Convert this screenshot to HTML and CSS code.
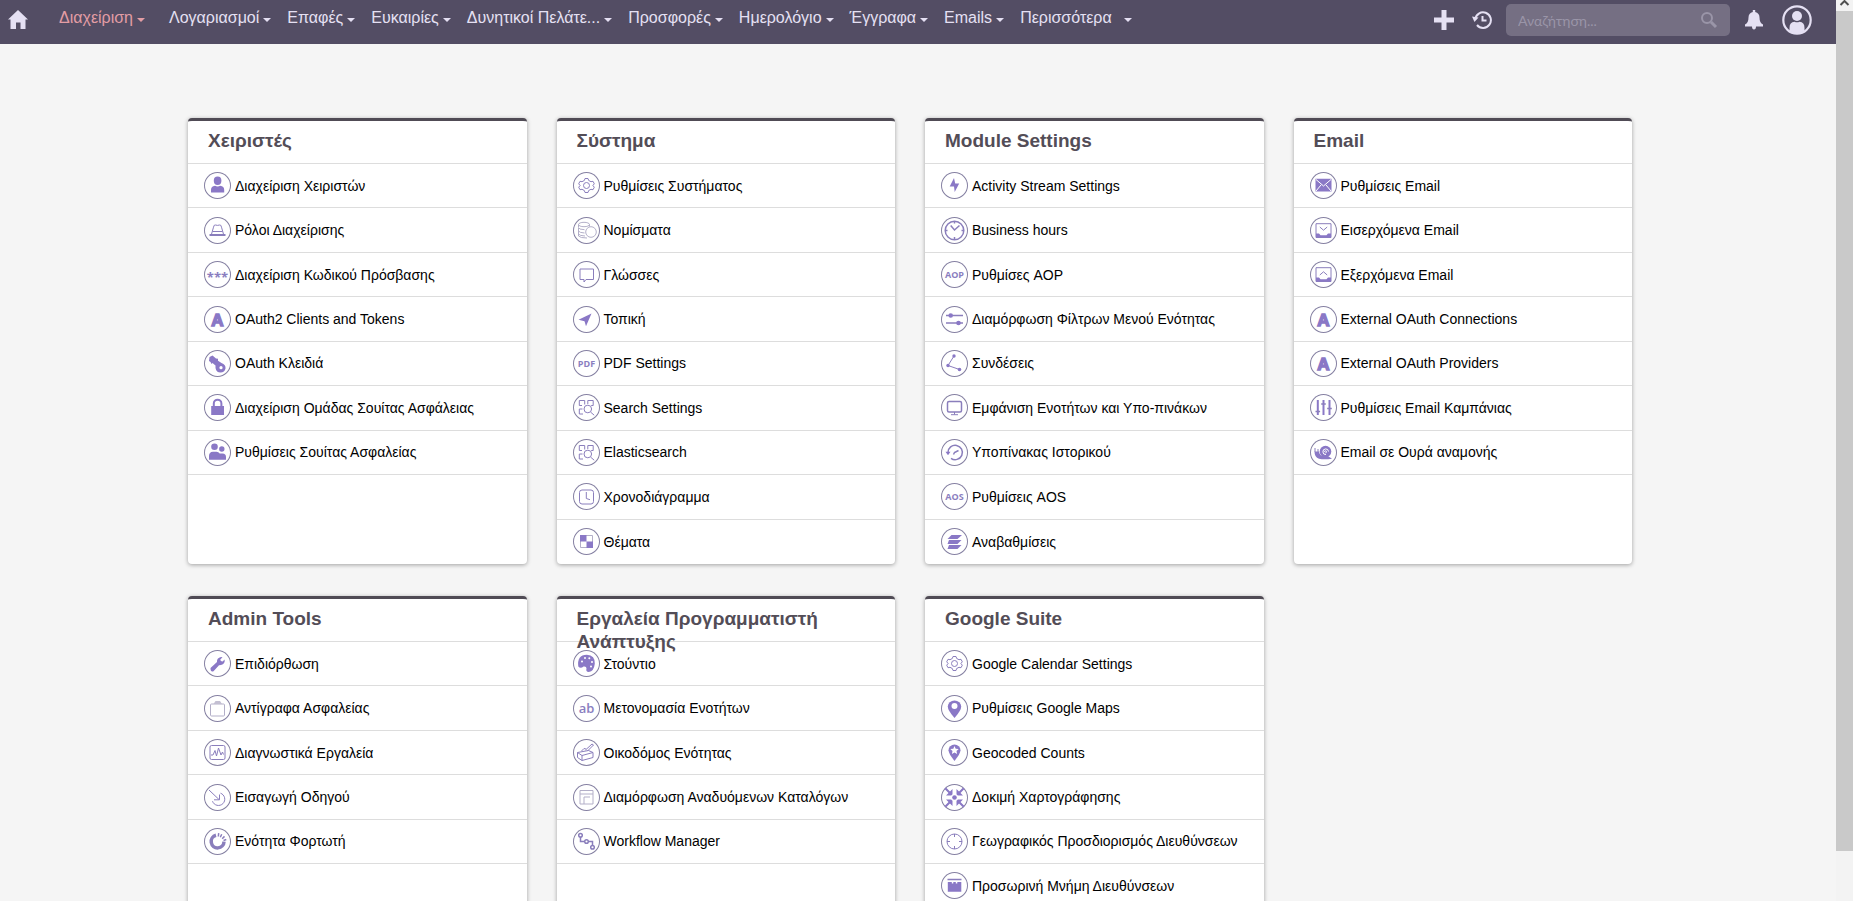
FILE: index.html
```html
<!DOCTYPE html>
<html lang="el">
<head>
    <meta charset="UTF-8">
    <meta name="viewport" content="width=device-width, initial-scale=1.0">
    <title>Διαχείριση</title>
    <link rel="stylesheet" href="styles.css">
</head>
<body>
    <svg class="sprite" aria-hidden="true">
        <symbol id="user" viewBox="0 0 27 27"><ellipse class="fill" cx="13.600" cy="8.700" rx="3.800" ry="4.200"/><path class="fill" d="M7 20.500v-2.500q0-4 4-4.300q2.600 1.500 5.200 0q4 .3 4 4.300v2.500z"/></symbol>
        <symbol id="hat" viewBox="0 0 27 27"><path class="line" d="M5.500 17.500h16M7.500 17.200l2-7q.4-2.700 2-2.200q2 .8 4 0q1.600-.5 2 2.200l2 7M8.500 14.500h10"/><path class="line" d="M5.500 18.500h16"/></symbol>
        <symbol id="stars" viewBox="0 0 27 27"><text x="13.500" y="21" font-size="13">***</text></symbol>
        <symbol id="oauth" viewBox="0 0 27 27"><text class="heavy" x="13.500" y="19.500" font-size="17">A</text></symbol>
        <symbol id="key" viewBox="0 0 27 27"><path class="fill" d="M5.500 7l3-1.500l3.500 3l2 .3v2l3.500 2.200q4.500 1.500 4 5.500q-.8 4-5 4t-5-4.500v-2.500l-3-2.500l-1 1l-1-2l-1.500-1z"/><circle class="hole" cx="17" cy="17.700" r="1.600"/></symbol>
        <symbol id="lock" viewBox="0 0 27 27"><path class="fill" d="M7.200 12h12.800v9h-12.800z"/><path class="thick" d="M9.800 12v-2.500a3.800 3.800 0 0 1 7.600 0v2.500"/></symbol>
        <symbol id="group" viewBox="0 0 27 27"><circle class="fill" cx="10.500" cy="7.800" r="3.300"/><circle class="fill" cx="17.800" cy="10" r="2.700"/><path class="fill" d="M5 20.700v-3.700q0-4 4-4.200h3.500q2 .2 3.200 1.700h2.800q3.500.2 3.500 3.500v2.700z"/></symbol>
        <symbol id="gear" viewBox="0 0 27 27"><path class="line" d="M12 6.500h3l.7 2l2.300 1.200l2-.4l1.300 2.500l-1.400 1.700l1.400 1.700l-1.300 2.500l-2-.4l-2.300 1.200l-.7 2h-3l-.7-2l-2.300-1.200l-2 .4l-1.300-2.500l1.400-1.700l-1.400-1.700l1.300-2.500l2 .4l2.300-1.200z"/><circle class="line" cx="13.500" cy="13.500" r="3"/></symbol>
        <symbol id="coins" viewBox="0 0 27 27"><ellipse class="thin" cx="11" cy="7.500" rx="5.500" ry="2.200"/><path class="thin" d="M5.500 7.500v3q0 2 6 2.200M5.500 11v3q1 1.800 6 2M5.500 14v3q1 1.800 6.500 2M5.500 17v2q1.500 2 8.500 2M16.500 7.500v2"/><circle class="thin" cx="18" cy="15" r="5.300"/></symbol>
        <symbol id="speech" viewBox="0 0 27 27"><path class="line" d="M7 8h13.500v10.500h-7.500l-2 2.500v-2.500h-4z"/></symbol>
        <symbol id="locale" viewBox="0 0 27 27"><path class="fill" d="M18.500 7.500l-13 6.200l6 1.500l1.500 5z"/></symbol>
        <symbol id="pdf" viewBox="0 0 27 27"><text x="13.500" y="16.500" font-size="9">PDF</text></symbol>
        <symbol id="find" viewBox="0 0 27 27"><path class="line" d="M9 11.500h-2.700v-5h5.400v4M14.800 10v-3.500h5.400v5h-2M10 20h-3.700v-5h3.200M17.700 18.200l3.500 3"/><circle class="line" cx="14.800" cy="15" r="3.800"/></symbol>
        <symbol id="clock" viewBox="0 0 27 27"><rect class="line" x="6.500" y="7" width="14" height="14" rx="2.500"/><path class="line" d="M13.300 9v6.500l3.700 1.200"/></symbol>
        <symbol id="themes" viewBox="0 0 27 27"><path class="thin" d="M7.500 7.500h12v12h-12z"/><path class="fill" d="M7 7h6.500v6.500h-6.500zM13.500 13.500h6.500v6.500h-6.500z"/></symbol>
        <symbol id="bolt" viewBox="0 0 27 27"><path class="fill" d="M13 6l-4.300 8.500h4.300l.7 5.500l4.500-8.500h-4z"/></symbol>
        <symbol id="hours" viewBox="0 0 27 27"><circle class="medium" cx="13.500" cy="13.500" r="9.300"/><path class="medium" d="M9.700 8.500l3.800 4.500l5-4.500M13.500 4.500v2M13.500 20v2.500M4.500 13.500h2M20.500 13.500h2"/></symbol>
        <symbol id="aop" viewBox="0 0 27 27"><text x="13.500" y="16.500" font-size="9">AOP</text></symbol>
        <symbol id="filters" viewBox="0 0 27 27"><path class="medium" d="M5 9.500h17M5 17h17"/><circle class="fill" cx="9.700" cy="9.500" r="2.300"/><circle class="fill" cx="17.500" cy="17" r="2.300"/></symbol>
        <symbol id="connect" viewBox="0 0 27 27"><path class="line" d="M13 6l-6 9.500l11.500 4"/><circle class="fill" cx="13" cy="6" r="1.700"/><circle class="fill" cx="7" cy="15.500" r="1.700"/><circle class="fill" cx="18.500" cy="19.500" r="1.800"/></symbol>
        <symbol id="monitor" viewBox="0 0 27 27"><rect class="medium" x="6.500" y="7.500" width="14" height="10.500" rx="1.500"/><path class="line" d="M13.500 18v2.500M10 20.700h7"/></symbol>
        <symbol id="recent" viewBox="0 0 27 27"><path class="medium" d="M7 13.500a7.200 7.200 0 1 1 3 5.800M12.500 15.500l1-2l4-2"/><path class="fill" d="M4.500 12.800h5l-2.500 3.400z"/></symbol>
        <symbol id="aos" viewBox="0 0 27 27"><text x="13.500" y="17" font-size="9">AOS</text></symbol>
        <symbol id="layers" viewBox="0 0 27 27"><path class="fill" d="M10.500 7h10.500l-4.500 4h-10zM8 12h12.500l-4 4h-10zM8 17h12.500l-4 4h-10z"/></symbol>
        <symbol id="mail" viewBox="0 0 27 27"><path class="fill" d="M5.500 6.800h16v12.700h-16z"/><path class="cut" d="M6 7.500l7.500 6.500l7.500-6.500M6 19l5-6M21 19l-5-6"/></symbol>
        <symbol id="inbox" viewBox="0 0 27 27"><path class="line" d="M6 6.700h15v13.800h-15zM9.800 10l3.700 3.200l3.700-3.200"/><path class="fill" d="M6 16.500h3l1.500 1.800h6l1.500-1.800h3v4h-15z"/></symbol>
        <symbol id="outbox" viewBox="0 0 27 27"><path class="line" d="M6 6.700h15v13.800h-15zM9.800 14l3.700-3.200l3.700 3.200"/><path class="fill" d="M6 16.500h3l1.500 1.800h6l1.500-1.800h3v4h-15z"/></symbol>
        <symbol id="sliders" viewBox="0 0 27 27"><path class="thick" d="M7.800 6v15M13.500 6v15M19.500 6v15"/><path class="medium" d="M5.500 17.500h4.600M11.200 10h4.600M17.200 14.500h4.600"/></symbol>
        <symbol id="snail" viewBox="0 0 27 27"><circle class="fill" cx="15.500" cy="12.500" r="5.800"/><path class="fill" d="M4.500 12.500h4.500q.5 4.500 5 4.500h4l4 2.800q-8 1-13 0q-4.500-1.300-4.500-7.300z"/><path class="line" d="M5 13v-4M8 13v-3"/><path class="cut" d="M18.500 12.500a2.800 2.800 0 1 0-2.500 3M14.500 12.800a1 1 0 1 1 1 1"/></symbol>
        <symbol id="wrench" viewBox="0 0 27 27"><path class="fill" d="M6.500 18l6.500-6q-.5-4 4-5l1.500.3l-2.200 2.200l.5 1.500l1.800.4l2-2q.8 4.300-3.600 5.600l-2 .2l-5.500 6q-3 1.500-3-3.200z"/></symbol>
        <symbol id="backup" viewBox="0 0 27 27"><rect class="thin" x="6.500" y="9" width="14" height="12" rx="1"/><path class="pale" d="M9.500 9l2-3h4.500l2 3z"/></symbol>
        <symbol id="pulse" viewBox="0 0 27 27"><rect class="line" x="6" y="6.500" width="15" height="14" rx="1.500"/><path class="line" d="M7 16h2l2-4.500l1.500 5.500l2-8l2.500 7l1.500-3l1 2.500"/></symbol>
        <symbol id="import" viewBox="0 0 27 27"><path class="line" d="M5 6l10 9.500M15.500 10.500v5.300h-5.500M16.500 9.200a6.300 6.300 0 1 1-8 8"/></symbol>
        <symbol id="loader" viewBox="0 0 27 27"><path class="ring" d="M12 7.300a6.400 6.400 0 1 0 8 6.300"/><path class="medium" d="M14.300 8.500l.4-3.300M16.300 9.300l1.400-3M18.200 10.700l2.300-2.300M19.500 12.500l2.800-1"/></symbol>
        <symbol id="palette" viewBox="0 0 27 27"><path class="fill" d="M5.300 16.500q-1.500-11.500 8.500-11.800q8.500.7 8 9q-.8 7.500-6 8.300q-3.300-.3-2.300-3.500q0-2.500-3-2q-3 2.500-5.200 0z"/><circle class="hole" cx="9" cy="11.500" r="1"/><circle class="hole" cx="12" cy="8" r="1"/><circle class="hole" cx="16.300" cy="8.200" r="1"/><circle class="hole" cx="19" cy="12" r="1"/><circle class="hole" cx="18" cy="16.500" r="1"/></symbol>
        <symbol id="rename" viewBox="0 0 27 27"><text class="light" x="13.500" y="18" font-size="13">ab</text></symbol>
        <symbol id="builder" viewBox="0 0 27 27"><path class="line" d="M4.500 13.500l11-2l4.500 2l-11 3zM4.500 13.500v5l4.500 3v-5M9 21.500l11-3v-5M8.500 12l2.500-2.500l2 .5M12.500 11l6.500-6l1.500 1l-6 6"/></symbol>
        <symbol id="dropdown" viewBox="0 0 27 27"><path class="thin" d="M7 6.500h13v13.500h-13zM7 10h13M11 13v7M11 13h6"/></symbol>
        <symbol id="workflow" viewBox="0 0 27 27"><path class="medium" d="M7.500 9v4.500h4M15.500 13.500h4v4"/><circle class="medium" cx="7.500" cy="7.200" r="1.800"/><circle class="medium" cx="13.500" cy="13.500" r="1.800"/><circle class="medium" cx="19.500" cy="19.300" r="1.800"/></symbol>
        <symbol id="pin" viewBox="0 0 27 27"><path class="fill" d="M13.500 23q-6.700-7.500-6.700-11.500a6.700 6 0 0 1 13.400 0q0 4-6.700 11.500z"/><circle class="hole" cx="13.500" cy="11" r="3"/></symbol>
        <symbol id="starpin" viewBox="0 0 27 27"><path class="fill" d="M13.500 22q-6-7.500-6-10.700a6 5.700 0 0 1 12 0q0 3.200-6 10.700z"/><path class="hole" d="M13.500 7l1.200 2.800l3 .3l-2.200 2l.6 2.900l-2.600-1.500l-2.600 1.500l.6-2.900l-2.200-2l3-.3z"/></symbol>
        <symbol id="converge" viewBox="0 0 27 27"><path class="thick" d="M4 4l5 5M23 4l-5 5M4 23l5-5M23 23l-5-5"/><path class="fill" d="M11.500 11.500h-6.500l6.500-6.500zM15.500 11.500h6.500l-6.500-6.500zM11.500 15.500h-6.500l6.500 6.500zM15.500 15.500h6.500l-6.500 6.500z"/><circle class="hole" cx="13.500" cy="13.500" r="3.600"/><circle class="fill" cx="13.500" cy="13.500" r="2.300"/></symbol>
        <symbol id="target" viewBox="0 0 27 27"><circle class="line" cx="13.500" cy="13.500" r="7.500"/><path class="line" d="M13.500 6v3M13.500 18v3M6 13.500h3M18 13.500h3"/></symbol>
        <symbol id="cache" viewBox="0 0 27 27"><path class="medium" d="M6.500 7.500h14"/><path class="fill" d="M6.800 10h4v1.500h1.500v-1.500h2.500v1.500h1.500v-1.500h4v9.700h-13.500z"/></symbol>
    </svg>

    <div class="window">
        <div class="page">
            <header class="topbar">
                <a class="home" href="#" aria-label="Αρχική">
                    <svg width="20" height="20" viewBox="0 0 20 20"><path fill="currentColor" d="M10 0l10 9.500h-2.500v9.500h-5v-6.500h-4.500v6.500h-5.500v-9.500h-2.500z"/></svg>
                </a>
                <nav class="menu">
                    <a class="active" href="#">Διαχείριση</a>
                    <a href="#">Λογαριασμοί</a>
                    <a href="#">Επαφές</a>
                    <a href="#">Ευκαιρίες</a>
                    <a href="#">Δυνητικοί Πελάτε...</a>
                    <a href="#">Προσφορές</a>
                    <a href="#">Ημερολόγιο</a>
                    <a href="#">Έγγραφα</a>
                    <a href="#">Emails</a>
                    <a class="more" href="#">Περισσότερα</a>
                </nav>
                <div class="tools">
                    <button type="button" aria-label="Δημιουργία">
                        <svg width="20" height="20" viewBox="0 0 20 20"><path fill="currentColor" d="M7.500 0h5v7.500h7.500v5h-7.500v7.500h-5v-7.500h-7.500v-5h7.500z"/></svg>
                    </button>
                    <button type="button" aria-label="Ιστορικό">
                        <svg width="20" height="20" viewBox="0 0 20 20" fill="none" stroke="currentColor" stroke-width="2"><path d="M3.300 9.500a7.800 7.800 0 1 1 1.700 5.500M10.500 6v4.500h4"/><path fill="currentColor" stroke="none" d="M0 6.500l6.500 1l-4 4.500z"/></svg>
                    </button>
                    <form class="search">
                        <input type="text" placeholder="Αναζήτηση..." aria-label="Αναζήτηση">
                        <button type="submit" aria-label="Εύρεση">
                            <svg width="18" height="18" viewBox="0 0 18 18" fill="none" stroke="currentColor" stroke-width="2"><circle cx="7" cy="7" r="5"/><path stroke-width="3" d="M11 11l5 5"/></svg>
                        </button>
                    </form>
                    <button type="button" aria-label="Ειδοποιήσεις">
                        <svg width="20" height="20" viewBox="0 0 20 20"><path fill="currentColor" d="M8.800 0h2.400v2q4.300 1 4.300 5.500q0 5.500 3.500 7v2h-7q0 3-2 3t-2-3h-7v-2q3.500-1.500 3.500-7q0-4.500 4.300-5.500z"/></svg>
                    </button>
                    <button type="button" class="avatar" aria-label="Προφίλ">
                        <svg width="30" height="30" viewBox="0 0 30 30"><circle cx="15" cy="15" r="13.700" fill="none" stroke="currentColor" stroke-width="2.200"/><circle cx="15" cy="11" r="5" fill="currentColor"/><path fill="currentColor" d="M7.500 26v-3q0-6 5-6.200q2.500 1 5 0q5 .2 5 6.200v3q-7.500 5-15 0z"/></svg>
                    </button>
                </div>
            </header>

            <main class="panels">
                <section class="panel">
                    <h2>Χειριστές</h2>
                    <ul>
                        <li><a href="#"><svg class="icon"><use href="#user"/></svg>Διαχείριση Χειριστών</a></li>
                        <li><a href="#"><svg class="icon"><use href="#hat"/></svg>Ρόλοι Διαχείρισης</a></li>
                        <li><a href="#"><svg class="icon"><use href="#stars"/></svg>Διαχείριση Κωδικού Πρόσβασης</a></li>
                        <li><a href="#"><svg class="icon"><use href="#oauth"/></svg>OAuth2 Clients and Tokens</a></li>
                        <li><a href="#"><svg class="icon"><use href="#key"/></svg>OAuth Κλειδιά</a></li>
                        <li><a href="#"><svg class="icon"><use href="#lock"/></svg>Διαχείριση Ομάδας Σουίτας Ασφάλειας</a></li>
                        <li><a href="#"><svg class="icon"><use href="#group"/></svg>Ρυθμίσεις Σουίτας Ασφαλείας</a></li>
                    </ul>
                </section>

                <section class="panel">
                    <h2>Σύστημα</h2>
                    <ul>
                        <li><a href="#"><svg class="icon"><use href="#gear"/></svg>Ρυθμίσεις Συστήματος</a></li>
                        <li><a href="#"><svg class="icon"><use href="#coins"/></svg>Νομίσματα</a></li>
                        <li><a href="#"><svg class="icon"><use href="#speech"/></svg>Γλώσσες</a></li>
                        <li><a href="#"><svg class="icon"><use href="#locale"/></svg>Τοπική</a></li>
                        <li><a href="#"><svg class="icon"><use href="#pdf"/></svg>PDF Settings</a></li>
                        <li><a href="#"><svg class="icon"><use href="#find"/></svg>Search Settings</a></li>
                        <li><a href="#"><svg class="icon"><use href="#find"/></svg>Elasticsearch</a></li>
                        <li><a href="#"><svg class="icon"><use href="#clock"/></svg>Χρονοδιάγραμμα</a></li>
                        <li><a href="#"><svg class="icon"><use href="#themes"/></svg>Θέματα</a></li>
                    </ul>
                </section>

                <section class="panel">
                    <h2>Module Settings</h2>
                    <ul>
                        <li><a href="#"><svg class="icon"><use href="#bolt"/></svg>Activity Stream Settings</a></li>
                        <li><a href="#"><svg class="icon"><use href="#hours"/></svg>Business hours</a></li>
                        <li><a href="#"><svg class="icon"><use href="#aop"/></svg>Ρυθμίσες AOP</a></li>
                        <li><a href="#"><svg class="icon"><use href="#filters"/></svg>Διαμόρφωση Φίλτρων Μενού Ενότητας</a></li>
                        <li><a href="#"><svg class="icon"><use href="#connect"/></svg>Συνδέσεις</a></li>
                        <li><a href="#"><svg class="icon"><use href="#monitor"/></svg>Εμφάνιση Ενοτήτων και Υπο-πινάκων</a></li>
                        <li><a href="#"><svg class="icon"><use href="#recent"/></svg>Υποπίνακας Ιστορικού</a></li>
                        <li><a href="#"><svg class="icon"><use href="#aos"/></svg>Ρυθμίσεις AOS</a></li>
                        <li><a href="#"><svg class="icon"><use href="#layers"/></svg>Αναβαθμίσεις</a></li>
                    </ul>
                </section>

                <section class="panel">
                    <h2>Email</h2>
                    <ul>
                        <li><a href="#"><svg class="icon"><use href="#mail"/></svg>Ρυθμίσεις Email</a></li>
                        <li><a href="#"><svg class="icon"><use href="#inbox"/></svg>Εισερχόμενα Email</a></li>
                        <li><a href="#"><svg class="icon"><use href="#outbox"/></svg>Εξερχόμενα Email</a></li>
                        <li><a href="#"><svg class="icon"><use href="#oauth"/></svg>External OAuth Connections</a></li>
                        <li><a href="#"><svg class="icon"><use href="#oauth"/></svg>External OAuth Providers</a></li>
                        <li><a href="#"><svg class="icon"><use href="#sliders"/></svg>Ρυθμίσεις Email Καμπάνιας</a></li>
                        <li><a href="#"><svg class="icon"><use href="#snail"/></svg>Email σε Ουρά αναμονής</a></li>
                    </ul>
                </section>

                <section class="panel">
                    <h2>Admin Tools</h2>
                    <ul>
                        <li><a href="#"><svg class="icon"><use href="#wrench"/></svg>Επιδιόρθωση</a></li>
                        <li><a href="#"><svg class="icon"><use href="#backup"/></svg>Αντίγραφα Ασφαλείας</a></li>
                        <li><a href="#"><svg class="icon"><use href="#pulse"/></svg>Διαγνωστικά Εργαλεία</a></li>
                        <li><a href="#"><svg class="icon"><use href="#import"/></svg>Εισαγωγή Οδηγού</a></li>
                        <li><a href="#"><svg class="icon"><use href="#loader"/></svg>Ενότητα Φορτωτή</a></li>
                    </ul>
                </section>

                <section class="panel">
                    <h2>Εργαλεία Προγραμματιστή Ανάπτυξης</h2>
                    <ul>
                        <li><a href="#"><svg class="icon"><use href="#palette"/></svg>Στούντιο</a></li>
                        <li><a href="#"><svg class="icon"><use href="#rename"/></svg>Μετονομασία Ενοτήτων</a></li>
                        <li><a href="#"><svg class="icon"><use href="#builder"/></svg>Οικοδόμος Ενότητας</a></li>
                        <li><a href="#"><svg class="icon"><use href="#dropdown"/></svg>Διαμόρφωση Αναδυόμενων Καταλόγων</a></li>
                        <li><a href="#"><svg class="icon"><use href="#workflow"/></svg>Workflow Manager</a></li>
                    </ul>
                </section>

                <section class="panel">
                    <h2>Google Suite</h2>
                    <ul>
                        <li><a href="#"><svg class="icon"><use href="#gear"/></svg>Google Calendar Settings</a></li>
                        <li><a href="#"><svg class="icon"><use href="#pin"/></svg>Ρυθμίσεις Google Maps</a></li>
                        <li><a href="#"><svg class="icon"><use href="#starpin"/></svg>Geocoded Counts</a></li>
                        <li><a href="#"><svg class="icon"><use href="#converge"/></svg>Δοκιμή Χαρτογράφησης</a></li>
                        <li><a href="#"><svg class="icon"><use href="#target"/></svg>Γεωγραφικός Προσδιορισμός Διευθύνσεων</a></li>
                        <li><a href="#"><svg class="icon"><use href="#cache"/></svg>Προσωρινή Μνήμη Διευθύνσεων</a></li>
                    </ul>
                </section>
            </main>
        </div>

        <div class="scrollbar" aria-hidden="true">
            <svg width="17" height="11" viewBox="0 0 17 11" fill="none" stroke="#505050" stroke-width="2"><path d="M4.500 5l4-4l4 4"/></svg>
            <div class="thumb"></div>
        </div>
    </div>
</body>
</html>
```

FILE: styles.css
```css
* {
    box-sizing: border-box;
}
body {
    margin: 0;
    background-color: #f5f5f5;
    font-family: "Liberation Sans", Arial, sans-serif;
    font-size: 14px;
    color: #000;
}
a {
    color: inherit;
    text-decoration: none;
}
button {
    padding: 0;
    border: none;
    background: none;
    color: inherit;
    cursor: pointer;
    display: flex;
}
.sprite {
    display: none;
}
.window {
    display: grid;
    grid-template-columns: 1fr 17px;
    height: 100vh;
    overflow: hidden;
}
.page {
    min-width: 0;
    overflow: hidden;
}

/* top bar */
.topbar {
    display: flex;
    align-items: flex-start;
    height: 44px;
    padding: 0 24px 0 8px;
    background-color: #534d64;
    color: #e5e0f3;
}
.home {
    margin-right: 31px;
    padding-top: 10px;
}
.menu {
    display: flex;
    gap: 16px;
    padding-top: 8px;
    font-size: 16px;
    line-height: 20px;
    white-space: nowrap;
}
.menu a {
    display: flex;
    align-items: center;
    gap: 4px;
}
.menu a::after {
    content: "";
    margin-top: 4px;
    border: 4px solid transparent;
    border-top-color: currentColor;
    border-bottom: 0;
}
.menu .active {
    margin-right: 8px;
    color: #e39da4;
}
.menu .more {
    gap: 12px;
}
.tools {
    display: flex;
    align-items: center;
    height: 40px;
    gap: 14px;
    margin-left: auto;
}
.tools > button:first-child {
    margin-right: 4px;
}
.tools .avatar {
    margin-left: 4px;
}
.search {
    display: flex;
    align-items: center;
    width: 224px;
    height: 32px;
    padding: 0 12px;
    border-radius: 5px;
    background-color: #756f83;
    color: #9a95a8;
}
.search input {
    flex: 1;
    min-width: 0;
    padding: 0;
    border: none;
    outline: none;
    background: none;
    color: #fff;
    font-family: Lato, "Open Sans", sans-serif;
    font-size: 14px;
}
.search input::placeholder {
    color: #9a95a8;
}

/* admin panels */
.panels {
    display: grid;
    grid-template-columns: repeat(4, 1fr);
    gap: 32px 30px;
    padding: 74px 204px 32px 188px;
}
.panel {
    border-top: 3px solid #504b55;
    border-radius: 4px;
    background-color: #fff;
    box-shadow: 0 1px 4px rgba(0, 0, 0, 0.35);
}
.panel h2 {
    height: 43px;
    margin: 0;
    padding: 8px 20px 0;
    border-bottom: 1px solid #ddd;
    color: #534d57;
    font-size: 19px;
    line-height: 23px;
}
.panel ul {
    display: grid;
    grid-template-rows: repeat(9, 1fr);
    height: 400px;
    margin: 0;
    padding: 0;
    list-style: none;
}
.panel li {
    border-bottom: 1px solid #ddd;
}
.panel li:nth-child(9) {
    border-bottom: none;
}
.panel li a {
    display: flex;
    align-items: center;
    gap: 4px;
    height: 100%;
    padding-left: 16px;
    white-space: nowrap;
}

/* round row icons */
.icon {
    flex: none;
    width: 27px;
    height: 27px;
    border-radius: 50%;
    box-shadow: inset 0 0 0 1px #8580a2;
}
.fill {
    fill: #8a78c6;
}
.pale {
    fill: #c3bfd2;
}
.hole {
    fill: #fff;
}
.line,
.thin,
.medium,
.thick,
.ring,
.cut {
    fill: none;
    stroke: #8a7ebc;
    stroke-width: 1;
}
.thin {
    stroke: #b3afc8;
}
.medium {
    stroke-width: 1.5;
}
.thick {
    stroke: #8a78c6;
    stroke-width: 2;
}
.ring {
    stroke-width: 3.5;
}
.cut {
    stroke: #fff;
}
symbol text {
    fill: #8a7ec0;
    font-family: "Open Sans", sans-serif;
    font-weight: bold;
    text-anchor: middle;
}
symbol .heavy {
    fill: #8a78c6;
    stroke: #8a78c6;
    stroke-width: 1.5;
    font-family: "Liberation Sans", Arial, sans-serif;
}
symbol .light {
    font-weight: 600;
}

/* scrollbar */
.scrollbar {
    display: flex;
    flex-direction: column;
    padding-bottom: 50px;
    background-color: #f3f3f3;
}
.scrollbar svg {
    flex: none;
}
.thumb {
    flex: 1;
    background-color: #c9c9c9;
}
```
